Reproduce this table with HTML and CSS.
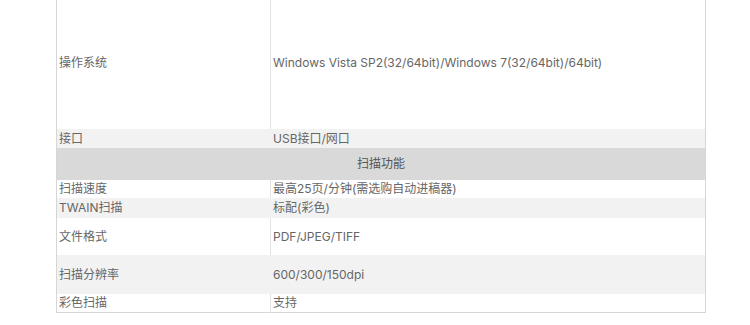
FILE: index.html
```html
<!DOCTYPE html>
<html lang="zh-CN">
<head>
<meta charset="utf-8">
<link rel="stylesheet" href="styles.css">
</head>
<body>
<div class="wrap">
<table class="spec">
  <colgroup><col class="c1"><col class="c2"></colgroup>
  <tr class="r-os white"><td class="k">操作系统</td><td>Windows Vista SP2(32/64bit)/Windows 7(32/64bit)/64bit)</td></tr>
  <tr class="r-if gray"><td class="k">接口</td><td>USB接口/网口</td></tr>
  <tr class="r-head"><td colspan="2">扫描功能</td></tr>
  <tr class="r-speed white"><td class="k">扫描速度</td><td>最高25页/分钟(需选购自动进稿器)</td></tr>
  <tr class="r-twain gray"><td class="k">TWAIN扫描</td><td>标配(彩色)</td></tr>
  <tr class="r-fmt white"><td class="k">文件格式</td><td>PDF/JPEG/TIFF</td></tr>
  <tr class="r-res gray"><td class="k">扫描分辨率</td><td>600/300/150dpi</td></tr>
  <tr class="r-color white"><td class="k">彩色扫描</td><td>支持</td></tr>
</table>
</div>
</body>
</html>
```
FILE: styles.css
```css
html, body {
  margin: 0;
  padding: 0;
  background: #fff;
}
.wrap {
  padding-left: 56px;
  margin-top: -4px;
}
.spec {
  width: 650px;
  border-collapse: collapse;
  border-left: 1px solid #d6d6d6;
  border-right: 1px solid #d6d6d6;
  border-bottom: 1px solid #d6d6d6;
  font-family: "Inter", "Noto Sans CJK SC", sans-serif;
  font-size: 12px;
  color: #666;
}
.c1 { width: 214px; }
.spec td {
  padding: 0 0 0 2px;
  vertical-align: middle;
  line-height: 16px;
}
.spec tr.white .k { border-right: 1px solid #e2e2e2; }
.spec tr.gray .k { border-right: 1px solid #f2f2f2; }
.white { background: #fff; }
.gray { background: #f2f2f2; }
.r-head { background: #d9d9d9; }
.r-head td { text-align: center; color: #555; height: 32px; padding: 0; }
.r-os td { height: 133px; }
.r-if td { height: 19px; }
.r-speed td { height: 18px; }
.r-twain td { height: 20px; }
.r-fmt td { height: 37px; }
.r-res td { height: 39px; }
.r-color td { height: 18px; }
```
